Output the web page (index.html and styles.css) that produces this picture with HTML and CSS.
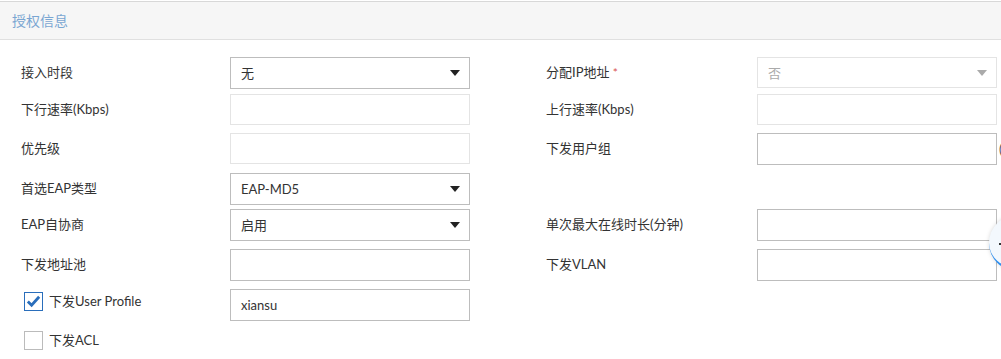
FILE: index.html
```html
<!DOCTYPE html>
<html lang="zh-CN">
<head>
    <meta charset="UTF-8">
    <title>授权信息</title>
    <link rel="stylesheet" href="styles.css">
</head>
<body>
    <div class="panel">
        <div class="panel-head">授权信息</div>
        <div class="form">
            <div class="label">接入时段</div>
            <div class="field select"><span>无</span><i class="arrow"></i></div>
            <div class="label r-label">分配IP地址 <span class="req">*</span></div>
            <div class="field select disabled"><span>否</span><i class="arrow"></i></div>

            <div class="label">下行速率(Kbps)</div>
            <div class="field disabled"></div>
            <div class="label r-label">上行速率(Kbps)</div>
            <div class="field disabled"></div>

            <div class="label">优先级</div>
            <div class="field disabled"></div>
            <div class="label r-label">下发用户组</div>
            <div class="field with-extra"><b class="extra">(</b></div>

            <div class="label">首选EAP类型</div>
            <div class="field select"><span>EAP-MD5</span><i class="arrow"></i></div>

            <div class="label">EAP自协商</div>
            <div class="field select"><span>启用</span><i class="arrow"></i></div>
            <div class="label r-label">单次最大在线时长(分钟)</div>
            <div class="field"></div>

            <div class="label">下发地址池</div>
            <div class="field"></div>
            <div class="label r-label">下发VLAN</div>
            <div class="field"></div>

            <div class="label check-label"><span class="box checked"><svg viewBox="0 0 18 18" width="18" height="18"><path d="M3 9.5 L7 13.5 L15 4.5" fill="none" stroke="#2a6ebb" stroke-width="3"/></svg></span>下发User Profile</div>
            <div class="field"><span>xiansu</span></div>

            <div class="label check-label"><span class="box"></span>下发ACL</div>
        </div>
    </div>
    <div class="float-btn"><span class="dot"></span></div>
</body>
</html>
```

FILE: styles.css
```css
body {
    margin: 0;
    background: #fff;
    font-family: "Lato", "Noto Sans CJK SC", sans-serif;
    font-size: 13px;
    color: #333;
    overflow: hidden;
    position: relative;
    height: 359px;
}
.panel {
    padding-top: 1px;
}
.panel-head {
    height: 37px;
    line-height: 37px;
    background: #f6f6f6;
    border-top: 1px solid #d8d8d8;
    border-bottom: 1px solid #e0e0e0;
    padding-left: 12px;
    color: #7aa6d2;
    font-size: 14px;
}
.form {
    display: grid;
    grid-template-columns: 209px 240px 76px 211px 240px;
    grid-template-rows: 37px 39px 40px 36px 40px 40px 39px auto;
    padding: 17px 0 0 21px;
}
.label {
    grid-column: 1;
    height: 32px;
    line-height: 30px;
    white-space: nowrap;
}
.r-label {
    grid-column: 4;
}
.req {
    color: #d9534f;
    font-size: 12px;
}
.field {
    box-sizing: border-box;
    height: 32px;
    border: 1px solid #bdbdbd;
    padding: 0 10px;
    line-height: 30px;
    display: flex;
    align-items: center;
    justify-content: space-between;
    position: relative;
}
.field.disabled {
    border-color: #e4e4e4;
    height: 31px;
    color: #aaa;
}
.arrow {
    width: 0;
    height: 0;
    border-left: 5px solid transparent;
    border-right: 5px solid transparent;
    border-top: 6px solid #222;
    margin-right: -1px;
}
.disabled .arrow {
    border-top-color: #aaa;
}
.extra {
    position: absolute;
    left: 241px;
    top: 0;
    font-weight: normal;
    color: #555;
}
.check-label {
    display: flex;
    align-items: center;
    padding-left: 3px;
    margin-top: -4px;
}
.box {
    box-sizing: border-box;
    width: 19px;
    height: 19px;
    border: 1px solid #bbb;
    margin-right: 6px;
    display: flex;
    align-items: center;
    justify-content: center;
}
.box.checked {
    border-color: #2a6ebb;
}
.float-btn {
    position: absolute;
    left: 989px;
    top: 215px;
    width: 56px;
    height: 56px;
    border-radius: 50%;
    background: #f3f8fd;
    box-shadow: 0 0 4px rgba(0, 0, 0, 0.15);
    border-bottom: 3px solid #2c8ef0;
    box-sizing: border-box;
}
.dot {
    position: absolute;
    left: 10px;
    top: 28px;
    width: 3px;
    height: 2px;
    background: #333;
}
```
